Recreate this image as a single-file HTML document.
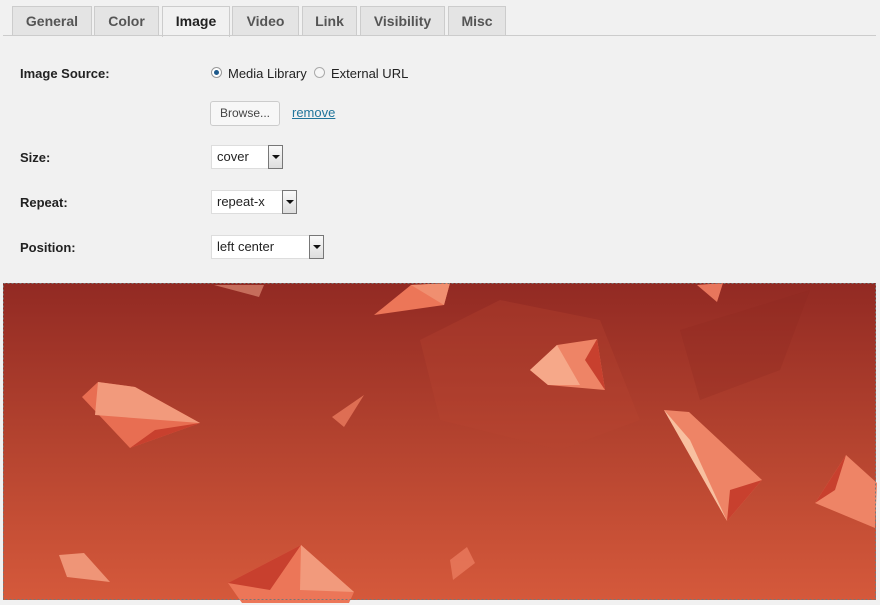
<!DOCTYPE html>
<html><head><meta charset="utf-8"><style>
*{margin:0;padding:0;box-sizing:border-box}
body{width:880px;height:605px;background:#f1f1f1;font-family:"Liberation Sans",sans-serif;font-size:13px;color:#222;position:relative;overflow:hidden}
.tab{position:absolute;top:6px;height:30px;background:#e4e4e4;border:1px solid #ccc;border-bottom:none;font-weight:bold;font-size:14px;color:#555;text-align:center;line-height:28px}
.tab.a{background:#f1f1f1;color:#222;height:31px}
.line{position:absolute;left:3px;right:4px;top:35px;border-top:1px solid #ccc}
.lbl{position:absolute;left:20px;font-weight:bold;font-size:13px}
.t{position:absolute;font-size:13px}
.sel{position:absolute;left:211px;height:24px;background:#fff;border:1px solid #ddd;font-size:13px;line-height:22px;padding-left:5px}
.arr{position:absolute;right:-1px;top:-1px;width:15px;height:24px;border:1px solid #777;background:linear-gradient(#fafafa,#ddd)}
.arr:after{content:"";position:absolute;left:3px;top:9px;border:4px solid transparent;border-top:4px solid #111;border-bottom:none}
</style></head><body>
<div class="tab" style="left:12px;width:80px">General</div>
<div class="tab" style="left:94px;width:65px">Color</div>
<div class="tab a" style="left:162px;width:68px">Image</div>
<div class="tab" style="left:232px;width:67px">Video</div>
<div class="tab" style="left:302px;width:55px">Link</div>
<div class="tab" style="left:360px;width:85px">Visibility</div>
<div class="tab" style="left:448px;width:58px">Misc</div>
<div class="line"></div>
<div class="lbl" style="top:66px">Image Source:</div>
<div style="position:absolute;left:211px;top:67px;width:11px;height:11px;border-radius:50%;border:1px solid #999;background:#fff"><div style="position:absolute;left:2px;top:2px;width:5px;height:5px;border-radius:50%;background:#1e5a8c"></div></div>
<div class="t" style="left:228px;top:66px">Media Library</div>
<div style="position:absolute;left:314px;top:67px;width:11px;height:11px;border-radius:50%;border:1px solid #aaa;background:#f6f6f6"></div>
<div class="t" style="left:331px;top:66px">External URL</div>
<div style="position:absolute;left:210px;top:101px;width:70px;height:25px;border:1px solid #ccc;background:#f7f7f7;border-radius:3px;font-size:12px;line-height:23px;text-align:center;color:#444">Browse...</div>
<div class="t" style="left:292px;top:105px;color:#21759b;text-decoration:underline">remove</div>
<div class="lbl" style="top:150px">Size:</div>
<div class="sel" style="top:145px;width:72px">cover<div class="arr"></div></div>
<div class="lbl" style="top:195px">Repeat:</div>
<div class="sel" style="top:190px;width:86px">repeat-x<div class="arr"></div></div>
<div class="lbl" style="top:240px">Position:</div>
<div class="sel" style="top:235px;width:113px">left center<div class="arr"></div></div>
<svg style="position:absolute;left:0;top:283px" width="880" height="322" viewBox="0 283 880 322">
<defs><linearGradient id="g" x1="0" y1="0" x2="0" y2="1"><stop offset="0" stop-color="#922a23"/><stop offset="0.5" stop-color="#b4432f"/><stop offset="1" stop-color="#d5593b"/></linearGradient></defs>
<rect x="3" y="283" width="873" height="317" fill="url(#g)"/>
<polygon points="420,340 500,300 600,320 640,420 560,450 440,420" fill="#b84533" opacity=".3"/>
<polygon points="680,330 810,290 780,370 700,400" fill="#8a2620" opacity=".25"/>
<polygon points="214,285 264,285 259,297" fill="#e89a80" opacity=".6"/>
<polygon points="374,315 411,285 450,283 444,305" fill="#ec7658"/>
<polygon points="411,285 450,283 444,305" fill="#f08f70"/>
<polygon points="697,285 723,283 717,302" fill="#e8765c"/>
<polygon points="82,397 98,382 135,387 200,423 130,448" fill="#e86e52"/>
<polygon points="98,382 135,387 200,423 95,415" fill="#f29a7c"/>
<polygon points="200,423 130,448 155,430" fill="#c8402e"/>
<polygon points="530,370 557,345 597,339 605,390 548,385" fill="#ee8466"/>
<polygon points="597,339 605,390 585,360" fill="#c8402e"/>
<polygon points="530,370 557,345 580,385 548,385" fill="#f6a889"/>
<polygon points="332,417 364,395 344,427" fill="#ea7a5e" opacity=".8"/>
<polygon points="664,410 689,412 762,480 727,521" fill="#ee8466"/>
<polygon points="664,410 690,440 727,521" fill="#f8c0a0"/>
<polygon points="762,480 727,521 730,490" fill="#c8402e"/>
<polygon points="815,503 846,455 877,483 875,528" fill="#ee8466"/>
<polygon points="846,455 835,490 815,503" fill="#c8402e"/>
<polygon points="59,555 84,553 110,582 67,577" fill="#ef9577"/>
<polygon points="450,560 467,547 475,563 453,580" fill="#ea7a5e" opacity=".8"/>
<polygon points="228,583 301,545 354,592 349,603 242,603" fill="#ec7658"/>
<polygon points="228,583 301,545 270,590" fill="#c8402e"/>
<polygon points="301,545 354,592 300,590" fill="#f29a7c"/>
<rect x="3.5" y="283.5" width="872" height="316" fill="none" stroke="#777" stroke-dasharray="2,2"/>
</svg>
</body></html>
